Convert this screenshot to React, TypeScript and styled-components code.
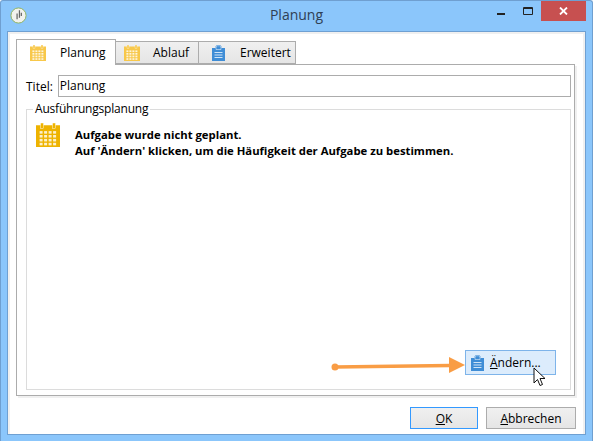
import styled, { createGlobalStyle } from 'styled-components';

const Global = createGlobalStyle`
  html, body { margin: 0; padding: 0; background: #fff; overflow: hidden; }
  body { font-family: "Open Sans", "Noto Sans", sans-serif; font-size: 12px; color: #000; }
`;

const Window = styled.div`
  position: relative;
  box-sizing: border-box;
  width: 593px;
  height: 441px;
  display: flex;
  flex-direction: column;
  background: #8bc6fb;
  border: 1px solid #6f9fd0;
  border-bottom: none;
  border-radius: 3px 3px 0 0;
`;

const TitleBar = styled.div`
  height: 30px;
  flex: none;
  display: flex;
  align-items: flex-start;
  position: relative;
  padding-left: 9px;
`;

const AppIcon = styled.svg`
  width: 17px;
  height: 17px;
  margin-top: 6px;
`;

const Title = styled.div`
  position: absolute;
  left: 0;
  right: 0;
  top: 4px;
  text-align: center;
  font-size: 14px;
  line-height: 20px;
  color: #2f4054;
`;

const Controls = styled.div`
  margin-left: auto;
  display: flex;
  align-items: flex-start;
  margin-right: 6px;
`;

const WinButton = styled.div<{ $close?: boolean }>`
  width: ${(p) => (p.$close ? 45 : 27)}px;
  height: 20px;
  display: flex;
  align-items: center;
  justify-content: center;
  background: ${(p) => (p.$close ? '#c75050' : 'transparent')};
`;

const Client = styled.div`
  flex: 1;
  margin: 0 6px 6px 6px;
  border: 1px solid #6fa0d2;
  background: #fff;
  box-shadow: inset 2px 2px 0 #f0f0f0, inset -2px 0 0 #f0f0f0;
  display: flex;
  flex-direction: column;
  padding: 7px 9px 5px 8px;
  min-height: 0;
`;

const TabRow = styled.div`
  display: flex;
  align-items: flex-end;
  height: 25px;
  flex: none;
  position: relative;
  z-index: 1;
`;

const Tab = styled.div<{ $active?: boolean; $w: number; $pad: number; $gap: number }>`
  box-sizing: border-box;
  width: ${(p) => p.$w}px;
  height: ${(p) => (p.$active ? 26 : 23)}px;
  margin-bottom: ${(p) => (p.$active ? -1 : 0)}px;
  margin-left: ${(p) => (p.$active ? 0 : -1)}px;
  border: 1px solid #acacac;
  border-bottom: ${(p) => (p.$active ? 'none' : '1px solid #acacac')};
  background: ${(p) => (p.$active ? '#fff' : 'linear-gradient(#f0f0f0, #e5e5e5)')};
  display: flex;
  align-items: center;
  padding-left: ${(p) => p.$pad}px;
  gap: ${(p) => p.$gap}px;
`;

const Pane = styled.div`
  flex: 1;
  box-sizing: border-box;
  margin-right: 1px;
  border: 1px solid #acacac;
  box-shadow: 2px 2px 0 #f0f0f0;
  background: #fff;
  padding: 10px 3px 5px 9px;
  display: flex;
  flex-direction: column;
  min-height: 0;
`;

const TitleRow = styled.div`
  display: flex;
  align-items: center;
  gap: 5px;
  height: 22px;
  flex: none;
`;

const TitleInput = styled.div`
  flex: 1;
  box-sizing: border-box;
  height: 22px;
  border: 1px solid #acacac;
  padding: 0 1px;
  line-height: 19px;
`;

const Group = styled.div`
  position: relative;
  flex: 1;
  margin-top: 12px;
  box-sizing: border-box;
  border: 1px solid #dcdcdc;
  padding: 13px 9px 14px 9px;
  display: flex;
  flex-direction: column;
`;

const GroupLabel = styled.div`
  position: absolute;
  left: 6px;
  top: -9px;
  padding: 0 2px;
  background: #fff;
  line-height: 16px;
  letter-spacing: -0.2px;
`;

const Message = styled.div`
  display: flex;
  gap: 15px;
`;

const MessageText = styled.div`
  font-weight: 700;
  font-size: 11.3px;
  line-height: 16px;
  padding-top: 4px;
`;

const GroupFooter = styled.div`
  margin-top: auto;
  display: flex;
  justify-content: flex-end;
  padding-right: 5px;
`;

const HotKey = styled.span`
  text-decoration: underline;
`;

const ChangeButton = styled.div`
  box-sizing: border-box;
  width: 91px;
  height: 25px;
  background: #dcecfc;
  border: 1px solid #7eb4ea;
  display: flex;
  align-items: center;
  padding-left: 5px;
  gap: 6px;
`;

const Footer = styled.div`
  flex: none;
  display: flex;
  justify-content: flex-end;
  gap: 8px;
  height: 22px;
  margin-top: 11px;
`;

const DialogButton = styled.div<{ $default?: boolean; $w: number }>`
  box-sizing: border-box;
  width: ${(p) => p.$w}px;
  height: 22px;
  border: 1px solid ${(p) => (p.$default ? '#3399ff' : '#acacac')};
  background: linear-gradient(#f0f0f0, #e5e5e5);
  display: flex;
  align-items: center;
  justify-content: center;
`;

const Arrow = styled.svg`
  position: absolute;
  left: 329px;
  top: 352px;
  width: 140px;
  height: 26px;
`;

const Cursor = styled.svg`
  position: absolute;
  left: 532px;
  top: 366px;
  width: 14px;
  height: 20px;
`;

function CalendarIcon({ size = 16, color = '#f8c84a' }: { size?: number; color?: string }) {
  const cells = [];
  for (let r = 0; r < 4; r++) {
    for (let c = 0; c < 4; c++) {
      cells.push(<rect key={`${r}-${c}`} x={2.4 + c * 3} y={5.4 + r * 2.6} width="2" height="1.7" fill="#fff" fillOpacity="0.8" />);
    }
  }
  return (
    <svg width={size} height={size} viewBox="0 0 16 16">
      <rect x="0" y="1.5" width="16" height="14.5" fill={color} />
      <rect x="3" y="0" width="2" height="3.5" fill={color} stroke="#fff" strokeWidth="0.3" />
      <rect x="11" y="0" width="2" height="3.5" fill={color} stroke="#fff" strokeWidth="0.3" />
      {cells}
    </svg>
  );
}

function ClipboardIcon({ w = 13, h = 16 }: { w?: number; h?: number }) {
  return (
    <svg width={w} height={h} viewBox="0 0 13 16">
      <path d="M0 3h3.5V1.5L5 0h3l1.5 1.5V3H13v13H0z" fill="#3f8dd6" />
      <path d="M4 4.5V2l1.3-1.2h2.4L9 2v2.5z" fill="#3f8dd6" stroke="#fff" strokeWidth="0.7" strokeOpacity="0.7" />
      <rect x="2.5" y="7" width="8" height="1" fill="#cfe4f7" />
      <rect x="2.5" y="9.5" width="8" height="1" fill="#cfe4f7" />
      <rect x="2.5" y="12" width="8" height="1" fill="#cfe4f7" />
    </svg>
  );
}

export default function App() {
  return (
    <>
      <Global />
      <Window>
        <TitleBar>
          <AppIcon viewBox="0 0 18 18">
            <circle cx="9" cy="9" r="8" fill="#f2f2ee" stroke="#8fb35a" strokeWidth="1" />
            <path d="M10 3.5v8M7.5 7v6M12 6v3.5" stroke="#666" strokeWidth="1.3" fill="none" />
          </AppIcon>
          <Title>Planung</Title>
          <Controls>
            <WinButton>
              <svg width="8" height="3" viewBox="0 0 8 3" style={{ marginTop: 6 }}>
                <rect width="8" height="2" fill="#222" />
              </svg>
            </WinButton>
            <WinButton>
              <svg width="10" height="8" viewBox="0 0 10 8">
                <path d="M.5.5h9v7h-9z M.5 1.5h9" stroke="#222" fill="none" strokeWidth="1" />
              </svg>
            </WinButton>
            <WinButton $close>
              <svg width="9" height="8" viewBox="0 0 9 8">
                <path d="M1 .5l7 7M8 .5l-7 7" stroke="#fff" strokeWidth="1.8" fill="none" />
              </svg>
            </WinButton>
          </Controls>
        </TitleBar>
        <Client>
          <TabRow>
            <Tab $active $w={100} $pad={13} $gap={14}>
              <CalendarIcon />
              <span>Planung</span>
            </Tab>
            <Tab $w={84} $pad={8} $gap={13}>
              <CalendarIcon />
              <span>Ablauf</span>
            </Tab>
            <Tab $w={98} $pad={13} $gap={15}>
              <ClipboardIcon />
              <span>Erweitert</span>
            </Tab>
          </TabRow>
          <Pane>
            <TitleRow>
              <span>Titel:</span>
              <TitleInput>Planung</TitleInput>
            </TitleRow>
            <Group>
              <GroupLabel>Ausführungsplanung</GroupLabel>
              <Message>
                <CalendarIcon size={24} color="#eeb300" />
                <MessageText>
                  Aufgabe wurde nicht geplant.
                  <br />
                  Auf 'Ändern' klicken, um die Häufigkeit der Aufgabe zu bestimmen.
                </MessageText>
              </Message>
              <GroupFooter>
                <ChangeButton>
                  <ClipboardIcon />
                  <span>
                    <HotKey>Ä</HotKey>ndern...
                  </span>
                </ChangeButton>
              </GroupFooter>
            </Group>
          </Pane>
          <Footer>
            <DialogButton $default $w={68}>
              <span>
                <HotKey>O</HotKey>K
              </span>
            </DialogButton>
            <DialogButton $w={90}>
              <span>
                <HotKey>A</HotKey>bbrechen
              </span>
            </DialogButton>
          </Footer>
        </Client>
        <Arrow viewBox="0 0 140 26">
          <circle cx="5" cy="14" r="3.5" fill="#f99d45" />
          <path d="M5 14 L120 12.5" stroke="#f99d45" strokeWidth="3.5" fill="none" />
          <path d="M119 4 L135 12 L119 20z" fill="#f99d45" />
        </Arrow>
        <Cursor viewBox="0 0 14 20">
          <path d="M1 1v15l3.5-3.5 2.5 6 2.5-1-2.5-6h5z" fill="#fff" stroke="#111" strokeWidth="1" />
        </Cursor>
      </Window>
    </>
  );
}
